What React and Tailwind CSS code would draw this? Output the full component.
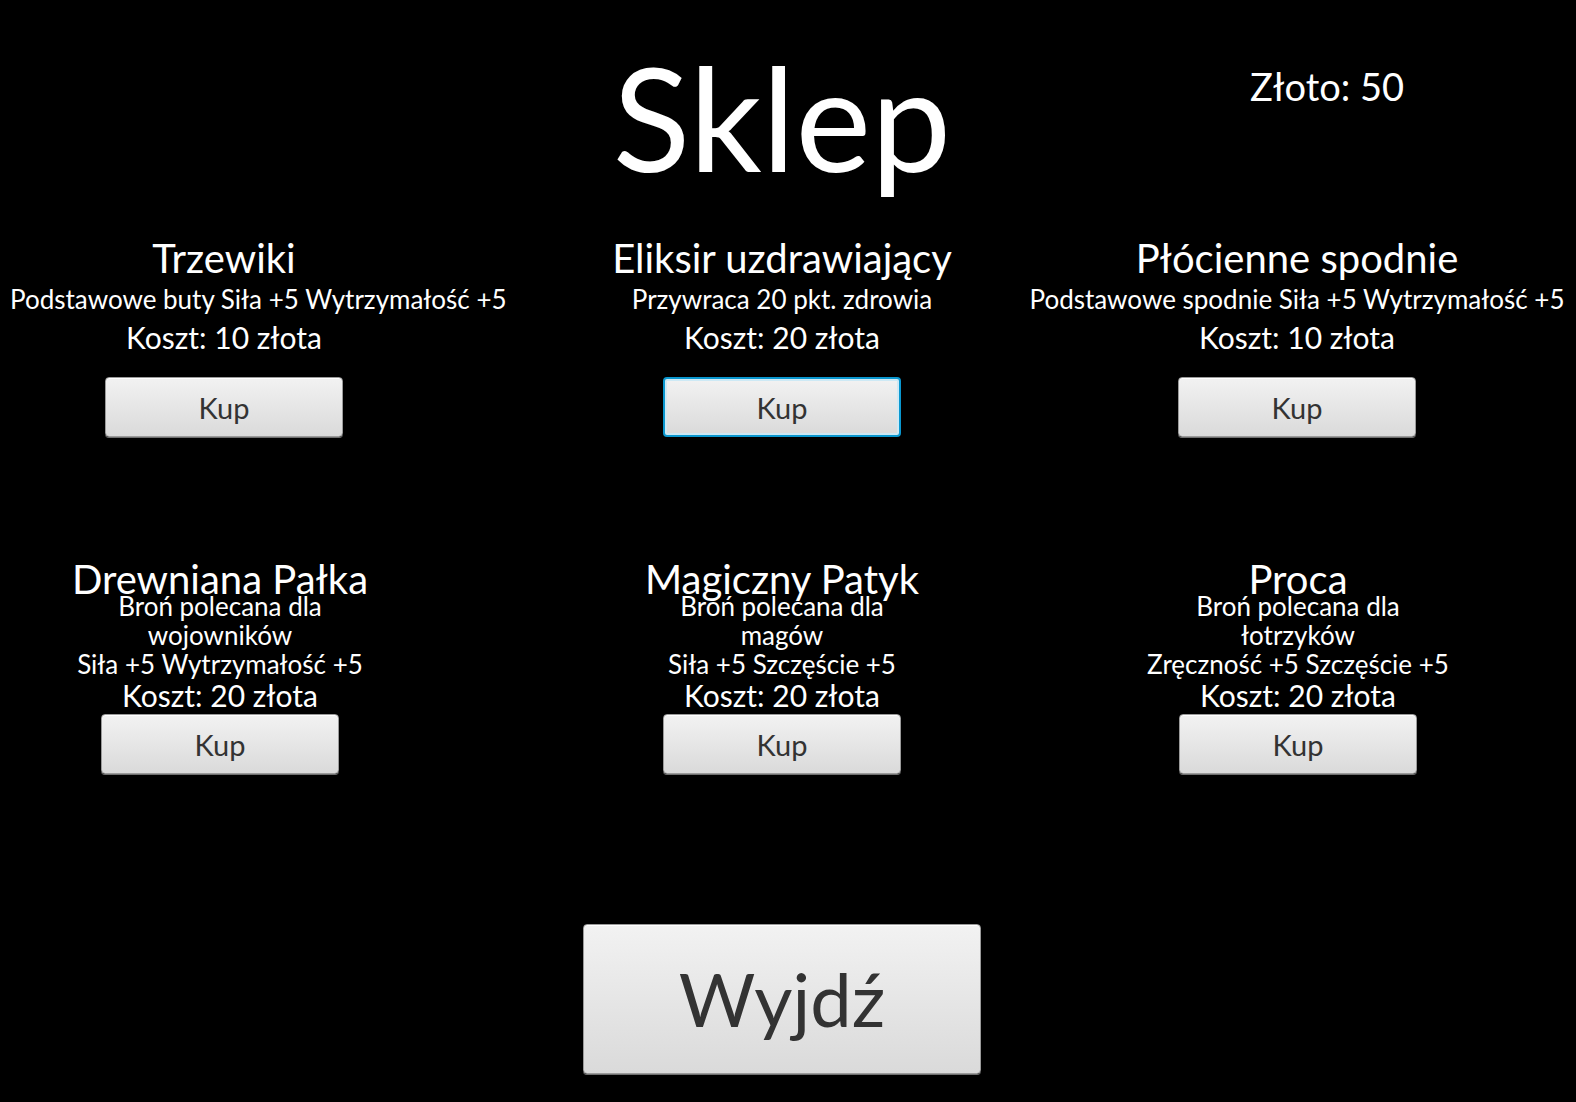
import React from "react";

const font = { fontFamily: "Lato, 'Open Sans', sans-serif" };

function KupButton({ focused }) {
  return (
    <button
      className={
        "w-[238px] h-[60px] rounded-[4px] bg-gradient-to-b from-[#f2f2f2] to-[#dadada] text-[#333333] text-[29px] leading-none flex items-center justify-center " +
        (focused
          ? "border-[2px] border-[#0a97cf] shadow-[inset_0_0_0_2px_#cde9f5]"
          : "border border-[#9a9a9a] shadow-[inset_0_1px_0_#ffffff,0_1px_0_#6f6f6f]")
      }
    >
      Kup
    </button>
  );
}

function TopItem({ title, desc, cost, focused, leftDesc }) {
  return (
    <div className="flex flex-col items-center">
      <div className="text-[40px] leading-[44px] whitespace-nowrap">{title}</div>
      <div
        className={
          "text-[26px] leading-[38px] whitespace-nowrap " + (leftDesc ? "self-start ml-[10px]" : "")
        }
      >
        {desc}
      </div>
      <div className="text-[30px] leading-[38px] whitespace-nowrap">{cost}</div>
      <div className="mt-[21px]">
        <KupButton focused={focused} />
      </div>
    </div>
  );
}

function BottomItem({ title, lines, cost, shift }) {
  return (
    <div className={"flex flex-col items-center " + (shift || "")}>
      <div className="text-[40px] leading-[26px] whitespace-nowrap">{title}</div>
      <div className="flex flex-col items-center">
        {lines.map((l, i) => (
          <div key={i} className="text-[26px] leading-[29px] whitespace-nowrap">
            {l}
          </div>
        ))}
      </div>
      <div className="text-[30px] leading-[32px] whitespace-nowrap">{cost}</div>
      <div className="mt-[3px]">
        <KupButton />
      </div>
    </div>
  );
}

export default function App() {
  return (
    <div className="w-[1576px] h-[1102px] bg-black text-white overflow-hidden" style={font}>
      <div className="grid grid-cols-[448px_668px_362px] h-[236px]">
        <div />
        <div className="flex justify-center pt-[47px]">
          <div className="text-[143px] leading-[140px]">Sklep</div>
        </div>
        <div className="flex justify-center pl-[60px] pt-[64px]">
          <div className="text-[38px] leading-[44px] whitespace-nowrap">Złoto: 50</div>
        </div>
      </div>

      <div className="grid grid-cols-[448px_668px_362px]">
        <TopItem title="Trzewiki" desc="Podstawowe buty Siła +5 Wytrzymałość +5" cost="Koszt: 10 złota" leftDesc />
        <TopItem title="Eliksir uzdrawiający" desc="Przywraca 20 pkt. zdrowia" cost="Koszt: 20 złota" focused />
        <TopItem title="Płócienne spodnie" desc="Podstawowe spodnie Siła +5 Wytrzymałość +5" cost="Koszt: 10 złota" />
      </div>

      <div className="grid grid-cols-[448px_668px_362px] mt-[129px]">
        <BottomItem title="Drewniana Pałka" lines={["Broń polecana dla", "wojowników", "Siła +5 Wytrzymałość +5"]} cost="Koszt: 20 złota" shift="pr-[8px]" />
        <BottomItem title="Magiczny Patyk" lines={["Broń polecana dla", "magów", "Siła +5 Szczęście +5"]} cost="Koszt: 20 złota" />
        <BottomItem title="Proca" lines={["Broń polecana dla", "łotrzyków", "Zręczność +5 Szczęście +5"]} cost="Koszt: 20 złota" shift="pl-[2px]" />
      </div>

      <div className="flex justify-center pr-[12px] mt-[150px]">
        <button className="w-[398px] h-[150px] rounded-[4px] border border-[#9a9a9a] bg-gradient-to-b from-[#f2f2f2] to-[#dadada] text-[#333333] text-[74px] leading-none flex items-center justify-center shadow-[inset_0_1px_0_#ffffff,0_1px_0_#6f6f6f]">
          Wyjdź
        </button>
      </div>
    </div>
  );
}
